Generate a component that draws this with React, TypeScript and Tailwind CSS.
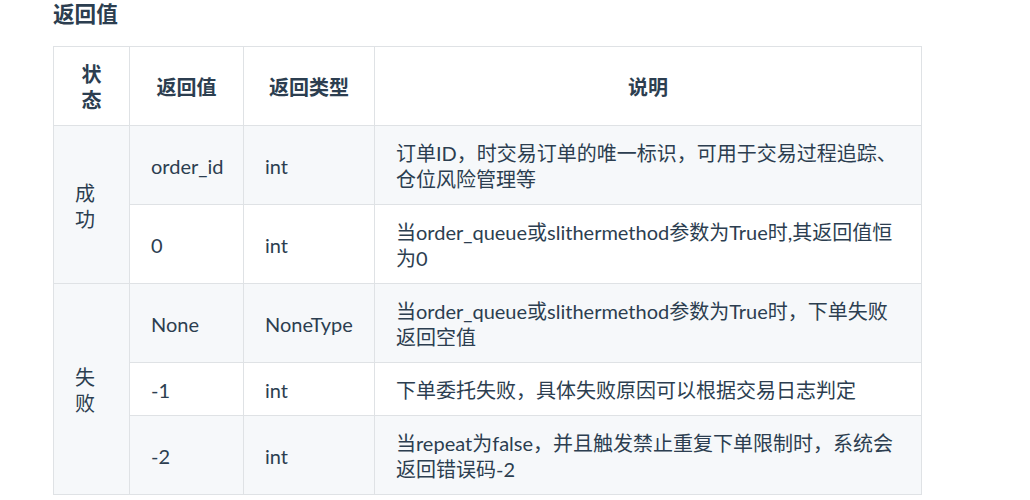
import React from 'react';

type Row = {
  status?: { label: string[]; span: number };
  value: string;
  type: string;
  desc: string[];
};

const rows: Row[] = [
  {
    status: { label: ['成', '功'], span: 2 },
    value: 'order_id',
    type: 'int',
    desc: ['订单ID，时交易订单的唯一标识，可用于交易过程追踪、', '仓位风险管理等'],
  },
  {
    value: '0',
    type: 'int',
    desc: ['当order_queue或slithermethod参数为True时,其返回值恒', '为0'],
  },
  {
    status: { label: ['失', '败'], span: 3 },
    value: 'None',
    type: 'NoneType',
    desc: ['当order_queue或slithermethod参数为True时，下单失败', '返回空值'],
  },
  {
    value: '-1',
    type: 'int',
    desc: ['下单委托失败，具体失败原因可以根据交易日志判定'],
  },
  {
    value: '-2',
    type: 'int',
    desc: ['当repeat为false，并且触发禁止重复下单限制时，系统会', '返回错误码-2'],
  },
];

const cell = 'border border-[#dfe2e5] px-[21px] pt-[14px] pb-[12px] align-middle';

const Lines = ({ lines }: { lines: string[] }) => (
  <>
    {lines.map((l, i) => (
      <span key={i} className="block whitespace-nowrap">
        {l}
      </span>
    ))}
  </>
);

export default function App() {
  return (
    <div
      className="w-[1030px] h-[500px] bg-white text-[#2c3e50] pl-[53px] overflow-hidden"
      style={{ fontFamily: 'Lato, "Noto Sans CJK SC", sans-serif' }}
    >
      {/* Section heading */}
      <h3 className="text-[21.6px] font-bold leading-[26px] pt-[1px]">返回值</h3>

      {/* Return value table */}
      <table className="mt-[19px] w-[869px] table-fixed border-collapse text-[20px] leading-[26px]">
        <colgroup>
          <col className="w-[76px]" />
          <col className="w-[114px]" />
          <col className="w-[131px]" />
          <col />
        </colgroup>
        <tbody>
          <tr className="bg-white">
            <th className={`${cell} font-bold text-center`}>
              <Lines lines={['状', '态']} />
            </th>
            <th className={`${cell} font-bold text-center`}>返回值</th>
            <th className={`${cell} font-bold text-center`}>返回类型</th>
            <th className={`${cell} font-bold text-center`}>说明</th>
          </tr>
          {rows.map((row, i) => (
            <tr key={i} className={i % 2 === 0 ? 'bg-[#f6f8fa]' : 'bg-white'}>
              {row.status && (
                <td rowSpan={row.status.span} className={cell}>
                  <Lines lines={row.status.label} />
                </td>
              )}
              <td className={`${cell} whitespace-nowrap`}>{row.value}</td>
              <td className={`${cell} whitespace-nowrap`}>{row.type}</td>
              <td className={cell}>
                <Lines lines={row.desc} />
              </td>
            </tr>
          ))}
        </tbody>
      </table>
    </div>
  );
}
